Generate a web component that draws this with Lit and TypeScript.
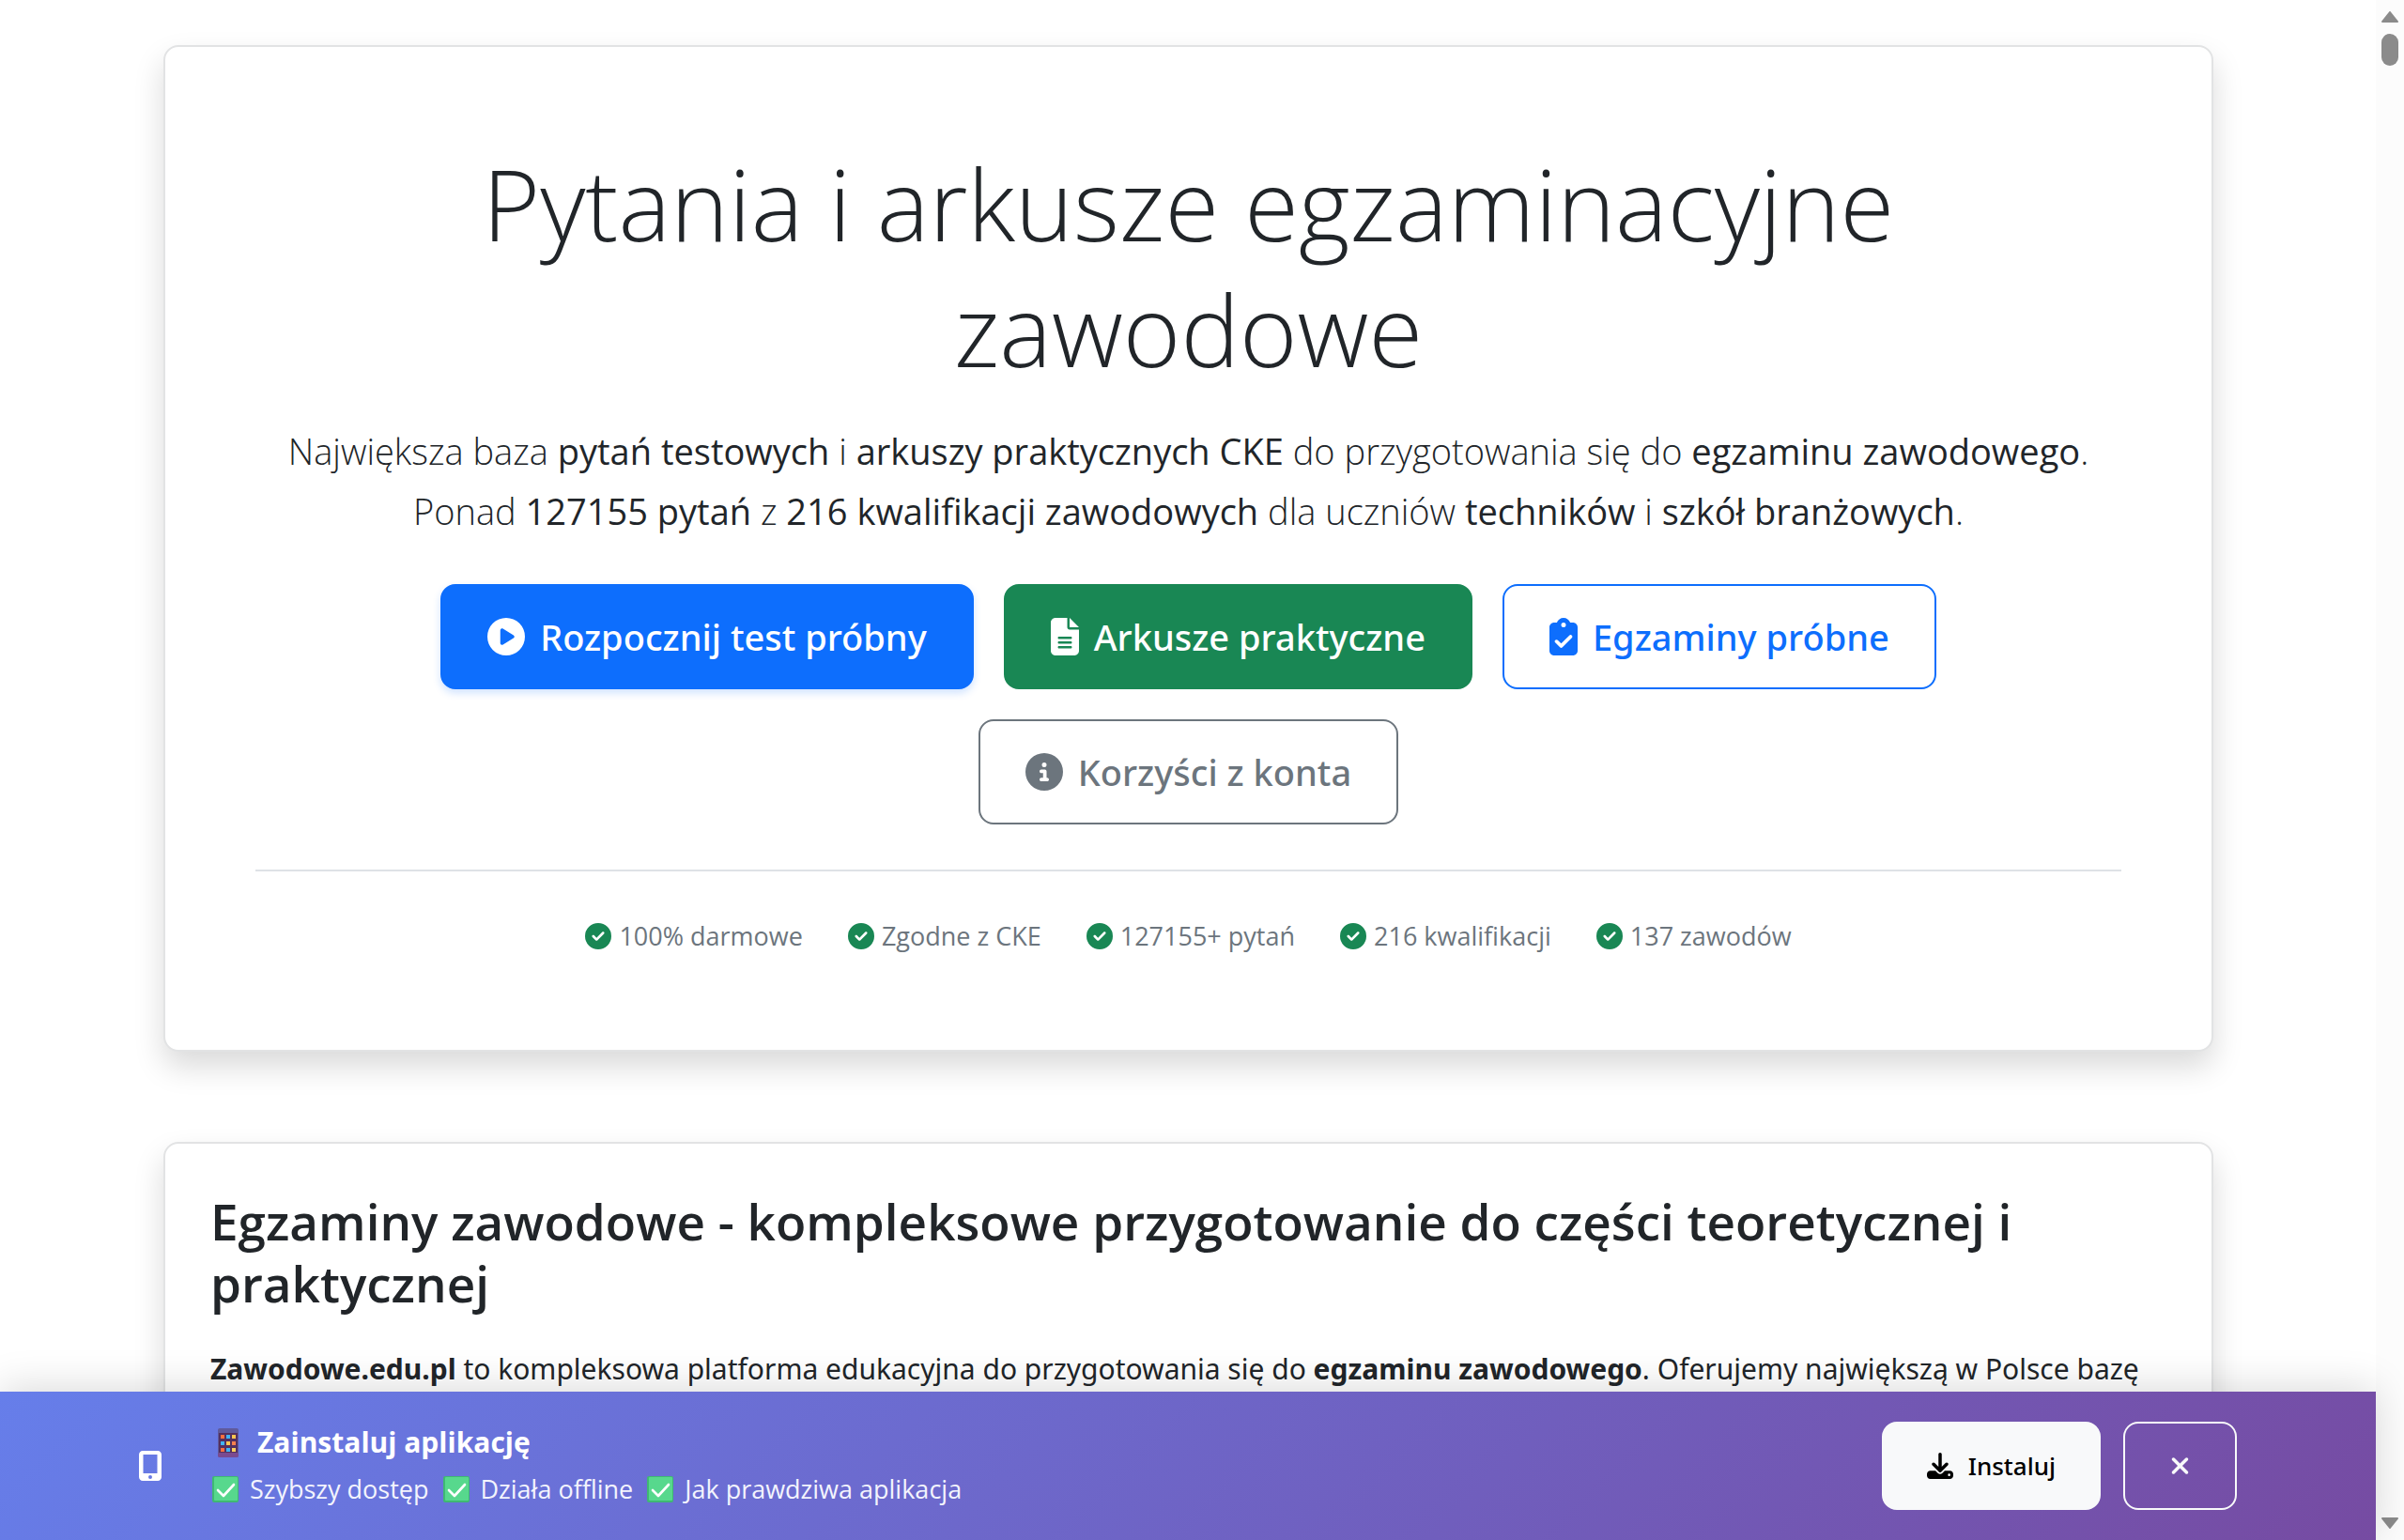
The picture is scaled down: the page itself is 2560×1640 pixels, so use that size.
import { LitElement, html, svg, css } from "lit";
import { customElement } from "lit/decorators.js";

interface Icon {
  w: number;
  d: string;
}

const icons: Record<string, Icon> = {
  play: { w: 512, d: "M0 256a256 256 0 1 1 512 0A256 256 0 1 1 0 256zM188.3 147.1c-7.6 4.2-12.3 12.3-12.3 20.9V344c0 8.7 4.7 16.7 12.3 20.9s16.8 4.1 24.3-.5l144-88c7.1-4.4 11.5-12.1 11.5-20.5s-4.4-16.1-11.5-20.5l-144-88c-7.4-4.5-16.7-4.7-24.3-.5z" },
  file: { w: 384, d: "M64 0C28.7 0 0 28.7 0 64V448c0 35.3 28.7 64 64 64H320c35.3 0 64-28.7 64-64V160H256c-17.7 0-32-14.3-32-32V0H64zM256 0V128H384L256 0zM112 256H272c8.8 0 16 7.2 16 16s-7.2 16-16 16H112c-8.8 0-16-7.2-16-16s7.2-16 16-16zm0 64H272c8.8 0 16 7.2 16 16s-7.2 16-16 16H112c-8.8 0-16-7.2-16-16s7.2-16 16-16zm0 64H272c8.8 0 16 7.2 16 16s-7.2 16-16 16H112c-8.8 0-16-7.2-16-16s7.2-16 16-16z" },
  clipboard: { w: 384, d: "M192 0c-41.8 0-77.4 26.7-90.5 64H64C28.7 64 0 92.7 0 128V448c0 35.3 28.7 64 64 64H320c35.3 0 64-28.7 64-64V128c0-35.3-28.7-64-64-64H282.5C269.4 26.7 233.8 0 192 0zm0 64a32 32 0 1 1 0 64 32 32 0 1 1 0-64zM305 273L177 401c-9.4 9.4-24.6 9.4-33.9 0L79 337c-9.4-9.4-9.4-24.6 0-33.9s24.6-9.4 33.9 0l47 47L271 239c9.4-9.4 24.6-9.4 33.9 0s9.4 24.6 0 33.9z" },
  info: { w: 512, d: "M256 512A256 256 0 1 0 256 0a256 256 0 1 0 0 512zM216 336h24V272H216c-13.3 0-24-10.7-24-24s10.7-24 24-24h48c13.3 0 24 10.7 24 24v88h8c13.3 0 24 10.7 24 24s-10.7 24-24 24H216c-13.3 0-24-10.7-24-24s10.7-24 24-24zm40-208a32 32 0 1 1 0 64 32 32 0 1 1 0-64z" },
  check: { w: 512, d: "M256 512A256 256 0 1 0 256 0a256 256 0 1 0 0 512zM369 209L241 337c-9.4 9.4-24.6 9.4-33.9 0l-64-64c-9.4-9.4-9.4-24.6 0-33.9s24.6-9.4 33.9 0l47 47L335 175c9.4-9.4 24.6-9.4 33.9 0s9.4 24.6 0 33.9z" },
  download: { w: 512, d: "M288 32c0-17.7-14.3-32-32-32s-32 14.3-32 32V274.7l-73.4-73.4c-12.5-12.5-32.8-12.5-45.3 0s-12.5 32.8 0 45.3l128 128c12.5 12.5 32.8 12.5 45.3 0l128-128c12.5-12.5 12.5-32.8 0-45.3s-32.8-12.5-45.3 0L288 274.7V32zM64 352c-35.3 0-64 28.7-64 64v32c0 35.3 28.7 64 64 64H448c35.3 0 64-28.7 64-64V416c0-35.3-28.7-64-64-64H346.5l-45.3 45.3c-25 25-65.5 25-90.5 0L165.5 352H64zm368 56a24 24 0 1 1 0 48 24 24 0 1 1 0-48z" },
  close: { w: 384, d: "M342.6 150.6c12.5-12.5 12.5-32.8 0-45.3s-32.8-12.5-45.3 0L192 210.7 86.6 105.4c-12.5-12.5-32.8-12.5-45.3 0s-12.5 32.8 0 45.3L146.7 256 41.4 361.4c-12.5 12.5-12.5 32.8 0 45.3s32.8 12.5 45.3 0L192 301.3 297.4 406.6c12.5 12.5 32.8 12.5 45.3 0s12.5-32.8 0-45.3L237.3 256 342.6 150.6z" },
  mobile: { w: 384, d: "M0 64C0 28.7 28.7 0 64 0H320c35.3 0 64 28.7 64 64V448c0 35.3-28.7 64-64 64H64c-35.3 0-64-28.7-64-64V64zM224 448a32 32 0 1 0 -64 0 32 32 0 1 0 64 0zM312 64H72V384H312V64z" },
};

const icon = (name: string, cls = "") => html`
  <svg class="icon ${cls}" viewBox="0 0 ${icons[name].w} 512" aria-hidden="true">
    <path d=${icons[name].d} fill="currentColor" fill-rule="evenodd"></path>
  </svg>`;

const tick = html`
  <svg class="tick" viewBox="0 0 28 28" aria-hidden="true">
    <rect width="28" height="28" rx="2" fill="#3fb873"></rect>
    <rect x="2" y="1" width="25" height="25" rx="1" fill="#57d88d"></rect>
    <path d="M6 15l6 6L23 9" fill="none" stroke="#fff" stroke-width="2.6" stroke-linecap="round" stroke-linejoin="round"></path>
  </svg>`;

const tileColors = ["#f8703f", "#3fb4f4", "#fdc64f", "#3fb4f4", "#fdc64f", "#f8804f", "#f8703f", "#3fb4f4", "#fdd05f"];

const phone = html`
  <svg class="phone" viewBox="0 0 22 31" aria-hidden="true">
    <rect width="22" height="31" rx="2" fill="#5f5a9c"></rect>
    <rect y="26" width="22" height="5" rx="2" fill="#7a4a90"></rect>
    <rect x="1" y="5" width="20" height="21" fill="#54305f"></rect>
    ${tileColors.map(
      (color, i) => svg`<rect x=${3 + (i % 3) * 6} y=${7 + Math.floor(i / 3) * 7} width="4" height="4" fill=${color}></rect>`
    )}
  </svg>`;

const actions = [
  { icon: "play", label: "Rozpocznij test próbny", kind: "primary" },
  { icon: "file", label: "Arkusze praktyczne", kind: "success" },
  { icon: "clipboard", label: "Egzaminy próbne", kind: "outline-primary" },
  { icon: "info", label: "Korzyści z konta", kind: "outline-secondary" },
];

const facts = ["100% darmowe", "Zgodne z CKE", "127155+ pytań", "216 kwalifikacji", "137 zawodów"];
const benefits = ["Szybszy dostęp", "Działa offline", "Jak prawdziwa aplikacja"];

@customElement("app-root")
export class AppRoot extends LitElement {
  static styles = css`
    :host {
      display: flex;
      height: 100vh;
      overflow: hidden;
      background: #fff;
      color: #212529;
      font-family: "Open Sans", "Noto Sans", sans-serif;
    }
    * { box-sizing: border-box; }
    h1, h2, p, ul { margin: 0; padding: 0; }
    ul { list-style: none; }
    .icon { flex: none; display: block; height: 28px; }
    .icon.lg { height: 40px; }
    .icon.md { height: 32px; }

    .page { flex: 1; min-width: 0; display: flex; flex-direction: column; }
    main {
      flex: 1;
      min-height: 0;
      overflow: hidden;
      display: flex;
      flex-direction: column;
      gap: 96px;
      padding: 48px 173px 0 174px;
    }
    .card {
      flex: none;
      border: 2px solid #e2e3e4;
      border-radius: 16px;
      background: #fff;
      box-shadow: 0 16px 32px rgba(0, 0, 0, 0.15);
    }
    .hero { padding: 100px 96px; text-align: center; }
    h1 {
      font-size: 105px;
      line-height: 134px;
      font-weight: 300;
      margin-bottom: 30px;
    }
    .lead { font-size: 38px; line-height: 64px; font-weight: 300; }
    .lead strong { font-weight: 400; }
    .actions {
      display: flex;
      flex-wrap: wrap;
      justify-content: center;
      gap: 32px;
      padding: 46px 96px 48px;
    }
    .btn {
      display: flex;
      align-items: center;
      gap: 16px;
      height: 112px;
      padding: 0 48px;
      border: 2px solid;
      border-radius: 16px;
      font-family: "Noto Sans", sans-serif;
      font-size: 38px;
      font-weight: 500;
      text-decoration: none;
      white-space: nowrap;
    }
    .primary { background: #0d6efd; border-color: #0d6efd; color: #fff; box-shadow: 0 4px 8px rgba(13, 110, 253, 0.2); }
    .success { background: #198754; border-color: #198754; color: #fff; }
    .outline-primary { color: #0d6efd; }
    .outline-secondary { color: #6c757d; }
    .facts {
      display: flex;
      flex-wrap: wrap;
      justify-content: center;
      gap: 48px;
      padding-top: 48px;
      border-top: 2px solid #dee2e6;
      color: #6c757d;
      font-size: 27px;
      line-height: 42px;
    }
    .facts li { display: flex; align-items: center; gap: 8px; }
    .facts .icon { color: #198754; }

    .about { padding: 50px 48px 96px; }
    h2 { font-size: 53px; line-height: 66px; font-weight: 600; margin-bottom: 32px; }
    .about p { font-family: "Noto Sans", sans-serif; font-size: 30px; line-height: 52px; }

    .install {
      position: relative;
      flex: none;
      display: flex;
      align-items: center;
      gap: 24px;
      padding: 32px 148px;
      color: #fff;
      background: linear-gradient(135deg, #667eea 0%, #764ba2 100%);
      box-shadow: 0 -4px 40px rgba(0, 0, 0, 0.15);
    }
    .pitch { flex: 1; display: flex; flex-direction: column; gap: 6px; margin-left: 30px; }
    .pitch h2 {
      display: flex;
      align-items: center;
      gap: 20px;
      margin: 0;
      padding-left: 6px;
      font-size: 30px;
      line-height: 44px;
      font-weight: 700;
    }
    .phone { width: 22px; height: 31px; }
    .tick { width: 28px; height: 28px; }
    .benefits { display: flex; gap: 15px; font-size: 27px; line-height: 44px; }
    .benefits li { display: flex; align-items: center; gap: 12px; color: #f3f4fd; }
    button {
      display: flex;
      align-items: center;
      justify-content: center;
      gap: 16px;
      height: 94px;
      padding: 0 46px;
      border: 2px solid #f8f9fa;
      border-radius: 16px;
      font: 500 26px "Noto Sans", sans-serif;
    }
    .get { background: #f8f9fa; color: #000; }
    .dismiss { background: transparent; color: #f8f9fa; padding: 0 48px; }

    .scroll {
      flex: none;
      width: 30px;
      display: flex;
      flex-direction: column;
      align-items: center;
      padding: 12px 0;
      background: #fcfcfc;
      color: #8b8b8b;
    }
    .scroll svg { display: block; width: 18px; height: 12px; }
    .thumb { width: 18px; height: 34px; margin: 12px 0 auto; border-radius: 9px; background: currentColor; }
  `;

  render() {
    return html`
      <div class="page">
        <main>
          <section class="card hero">
            <h1>Pytania i arkusze egzaminacyjne zawodowe</h1>
            <p class="lead">
              Największa baza <strong>pytań testowych</strong> i <strong>arkuszy praktycznych CKE</strong> do przygotowania się do <strong>egzaminu zawodowego</strong>.<br />
              Ponad <strong>127155 pytań</strong> z <strong>216 kwalifikacji zawodowych</strong> dla uczniów <strong>techników</strong> i <strong>szkół branżowych</strong>.
            </p>
            <nav class="actions">
              ${actions.map((a) => html`<a class="btn ${a.kind}" href="#">${icon(a.icon, "lg")}<span>${a.label}</span></a>`)}
            </nav>
            <ul class="facts">
              ${facts.map((f) => html`<li>${icon("check")}<span>${f}</span></li>`)}
            </ul>
          </section>
          <section class="card about">
            <h2>Egzaminy zawodowe - kompleksowe przygotowanie do części teoretycznej i praktycznej</h2>
            <p>
              <strong>Zawodowe.edu.pl</strong> to kompleksowa platforma edukacyjna do przygotowania się do <strong>egzaminu zawodowego</strong>. Oferujemy największą w Polsce bazę
            </p>
          </section>
        </main>
        <aside class="install">
          ${icon("mobile", "md")}
          <div class="pitch">
            <h2>${phone}<span>Zainstaluj aplikację</span></h2>
            <ul class="benefits">
              ${benefits.map((b) => html`<li>${tick}<span>${b}</span></li>`)}
            </ul>
          </div>
          <button class="get" type="button">${icon("download")}<span>Instaluj</span></button>
          <button class="dismiss" type="button" aria-label="Zamknij">${icon("close")}</button>
        </aside>
      </div>
      <div class="scroll" aria-hidden="true">
        <svg viewBox="0 0 18 12"><path d="M9 1L17 11H1z" fill="currentColor" stroke="currentColor" stroke-width="2" stroke-linejoin="round"></path></svg>
        <div class="thumb"></div>
        <svg viewBox="0 0 18 12"><path d="M9 11L17 1H1z" fill="currentColor" stroke="currentColor" stroke-width="2" stroke-linejoin="round"></path></svg>
      </div>
    `;
  }
}
